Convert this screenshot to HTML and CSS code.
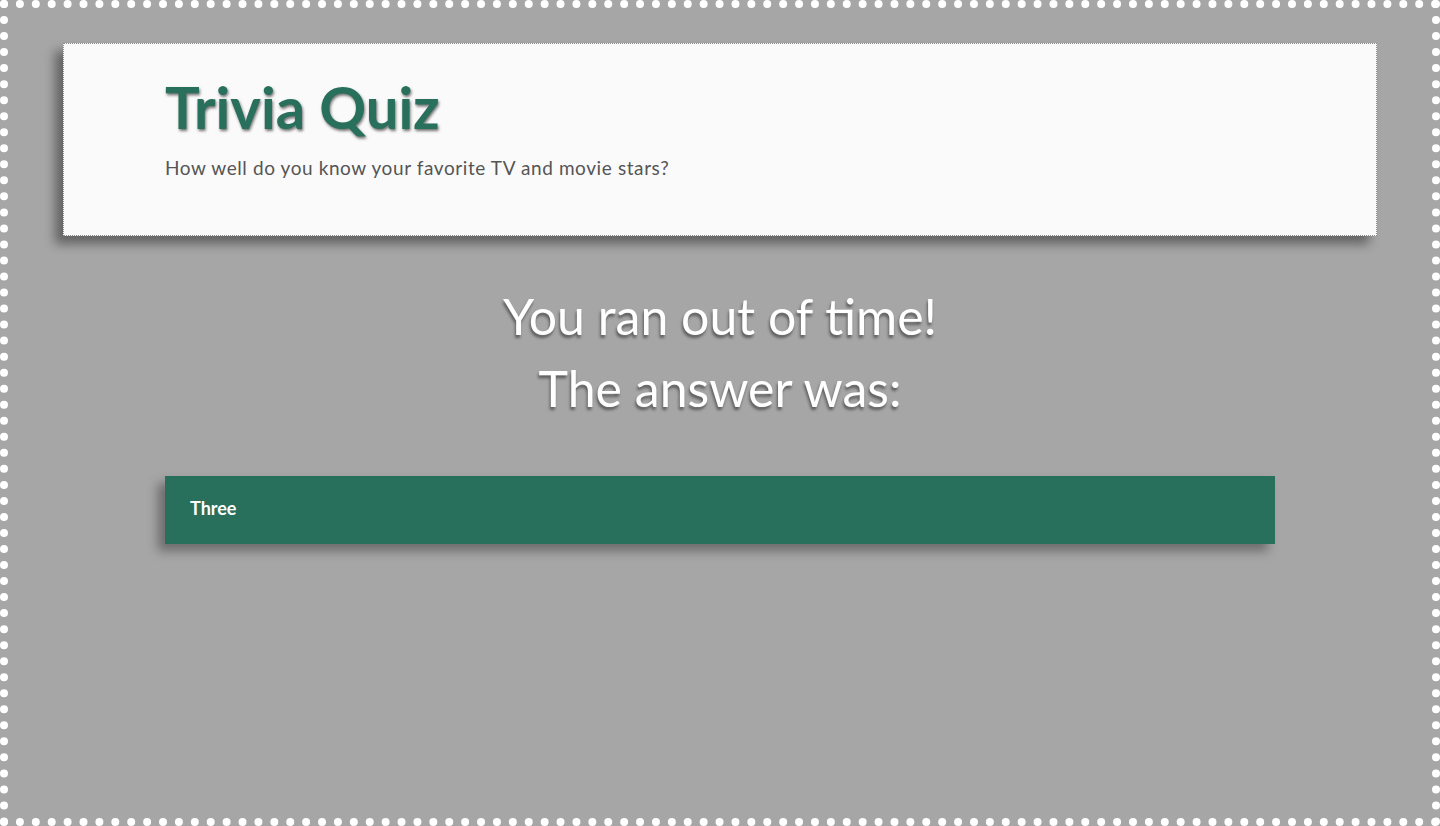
FILE: index.html
```html
<!DOCTYPE html>
<html lang="en">
<head>
<meta charset="utf-8">
<title>Trivia Quiz</title>
<link rel="stylesheet" href="styles.css">
</head>
<body>
<header class="hero">
  <div class="container">
    <h1 class="title">Trivia Quiz</h1>
    <p class="lead">How well do you know your favorite TV and movie stars?</p>
  </div>
</header>
<main class="container">
  <h2 class="message">You ran out of time!<br>The answer was:</h2>
  <div class="answer">Three</div>
</main>
</body>
</html>
```
FILE: styles.css
```css
* { box-sizing: border-box; }
html, body { margin: 0; padding: 0; }
body {
  min-height: 100vh;
  background: #a6a6a6;
  border: 8px dotted #ffffff;
  font-family: Lato, "Noto Sans", sans-serif;
  overflow: hidden;
}
.container {
  max-width: 1140px;
  margin: 0 auto;
  padding: 0 15px;
}
.hero {
  margin: 35px 55px 0;
  height: 193px;
  background: #fafafa;
  border: 1px dotted #8a8a8a;
  box-shadow: -8px 8px 10px rgba(0, 0, 0, 0.4);
  padding-top: 28px;
}
.title {
  margin: 0;
  font-size: 58px;
  line-height: 70px;
  font-weight: 700;
  color: #286f5c;
  text-shadow: 1px 2px 3px rgba(0, 0, 0, 0.55);
}
.lead {
  margin: 14px 0 0;
  font-size: 19px;
  line-height: 24px;
  letter-spacing: 0.6px;
  color: #555555;
}
.message {
  margin: 44px 0 0;
  text-align: center;
  font-size: 50px;
  line-height: 72px;
  font-weight: 400;
  color: #ffffff;
  text-shadow: -1px 3px 3px rgba(0, 0, 0, 0.45);
}
.answer {
  margin-top: 52px;
  height: 68px;
  padding: 20px 25px;
  background: #286f5c;
  color: #ffffff;
  font-size: 18px;
  line-height: 24px;
  font-weight: 700;
  box-shadow: -7px 7px 10px rgba(0, 0, 0, 0.35);
}
```
